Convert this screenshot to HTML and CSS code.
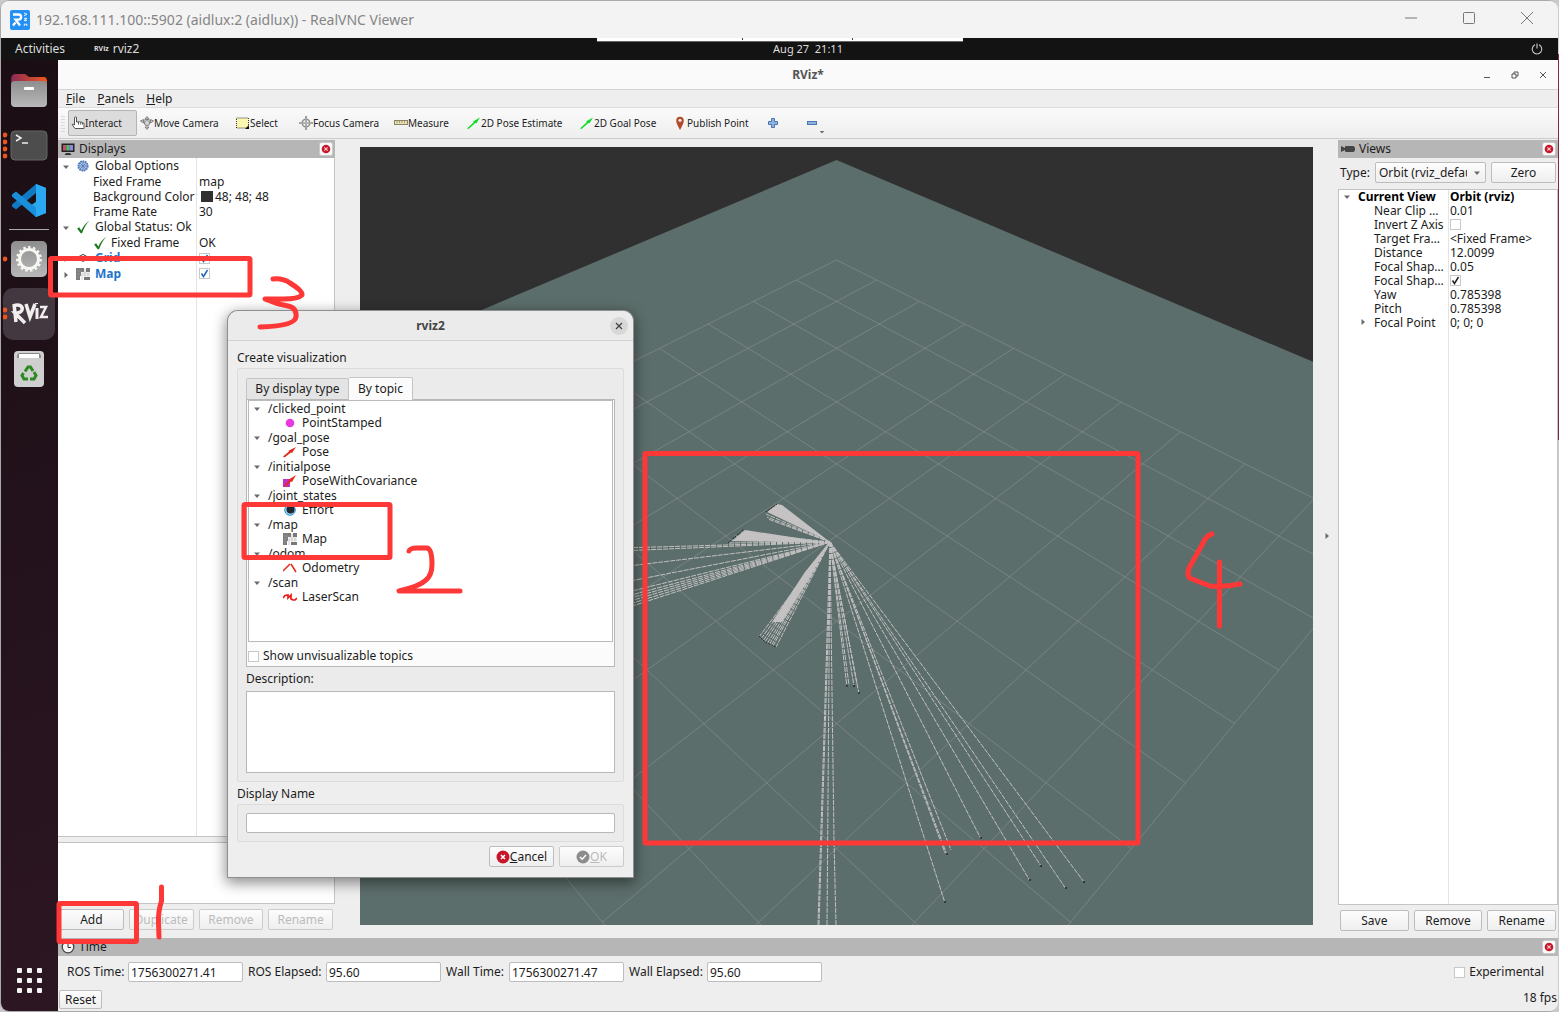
FILE: index.html
```html
<!DOCTYPE html>
<html lang="en">
<head>
<meta charset="utf-8">
<title>192.168.111.100::5902 (aidlux:2 (aidlux)) - RealVNC Viewer</title>
<link rel="stylesheet" href="styles.css">
</head>
<body>
<svg class="defs" width="0" height="0" aria-hidden="true">
  <symbol id="i-close" viewBox="0 0 14 14"><rect x=".5" y=".5" width="13" height="13" rx="2" fill="#fafafa" stroke="#c9c9c9"/><circle cx="7" cy="7" r="4.300" fill="#c8192b"/><path d="M5.300 5.300l3.400 3.400M8.700 5.300L5.300 8.700" stroke="#f3c4c8" stroke-width="1.200"/></symbol>
  <symbol id="i-down" viewBox="0 0 8 8"><path d="M1 2.500h6L4 6z" fill="#6a6a6a"/></symbol>
  <symbol id="i-right" viewBox="0 0 8 8"><path d="M2.500 1v6L6 4z" fill="#6a6a6a"/></symbol>
  <symbol id="i-map" viewBox="0 0 14 14"><path d="M0 1h8v4H5v4H4v4H0z" fill="#787878"/><path d="M10 1h4v4h-4zM8 10h6v3H8z" fill="#787878"/><path d="M6 6h8M6 8h8M6 6v7M9 2v8M12 6v4" stroke="#c4c4c4" stroke-width=".8" fill="none"/><path d="M2 1v12M4 1v8M0 4h8M0 7h4M0 10h4" stroke="#9a9a9a" stroke-width=".5"/></symbol>
  <symbol id="i-check" viewBox="0 0 12 12"><path d="M1 7.200l1.700-1L4.600 9C6 5.500 8 3 11.400.6 8.300 4 6.600 7.400 5.200 11.400H4z" fill="#1f7a1f"/></symbol>
  <symbol id="i-green" viewBox="0 0 14 14"><path d="M0 12.500L7 6l-1-.6L13 1.500 9.500 7.300 8.400 7 1.600 13z" fill="#10dc28"/></symbol>
  <symbol id="i-move" viewBox="0 0 14 14"><g fill="#d4d4d4" stroke="#777" stroke-width=".9"><path d="M7 .6l2 2.400H5zM7 13.400l2-2.400H5zM.500 5l3-1.500v3.500zM13.500 5l-3-1.500v3.500z"/><circle cx="7" cy="7" r="2.600"/><path d="M3.500 4.500c2-1.400 5-1.400 7 0"/></g></symbol>
  <symbol id="i-focus" viewBox="0 0 14 14"><g fill="none" stroke="#8a8a8a"><circle cx="7" cy="7" r="3.800" stroke-width="1.400"/><path d="M7 0v14M0 7h14" stroke-width="1.600"/><path d="M7 2v10M2 7h10" stroke="#ddd" stroke-width=".5"/></g></symbol>
</svg>

<div class="window">
  <header class="vnc-bar">
    <svg class="vnc-logo" viewBox="0 0 20 20"><rect width="20" height="20" rx="2" fill="#2490f5"/><path d="M3 4.500h5.500a2.600 2.600 0 0 1 0 5.200H5.500L10 15.500M3 15.500l2.500-3" fill="none" stroke="#fff" stroke-width="2.300"/><path d="M14 3l3 1.300-3 1.400M14 8.300h3l-3 2.300h3M14.300 16v-1.800h2.600V16" fill="none" stroke="#fff" stroke-width=".9"/></svg>
    <span class="vnc-title">192.168.111.100::5902 (aidlux:2 (aidlux)) - RealVNC Viewer</span>
    <div class="vnc-controls">
      <button type="button" aria-label="Minimize"><svg viewBox="0 0 12 12"><path d="M0 6.500h12"/></svg></button>
      <button type="button" aria-label="Maximize"><svg viewBox="0 0 12 12"><rect x=".5" y="1" width="11" height="11" rx="1"/></svg></button>
      <button type="button" aria-label="Close"><svg viewBox="0 0 12 12"><path d="M0 .5l12 12M12 .5L0 12.500"/></svg></button>
    </div>
  </header>

  <div class="desktop">
    <div class="topbar">
      <div class="top-left"><span>Activities</span><span class="app"><b class="mini">RViz</b>rviz2</span></div>
      <span class="clock">Aug 27&nbsp; 21:11</span>
      <svg class="power" viewBox="0 0 12 12"><path d="M4 1.800a4.800 4.800 0 1 0 4 0M6 .5v5" fill="none" stroke="#ccc" stroke-width="1.100"/></svg>
      <div class="handle"><i></i><i></i></div>
    </div>

    <div class="workspace">
      <nav class="dock" aria-label="Dock">
        <div class="slot"><svg viewBox="0 0 52 52"><defs><linearGradient id="fo"><stop offset="0" stop-color="#8a2a56"/><stop offset="1" stop-color="#f0591f"/></linearGradient><linearGradient id="gr" x2="0" y2="1"><stop offset="0" stop-color="#8e8e8e"/><stop offset="1" stop-color="#b8b8b8"/></linearGradient></defs><path d="M8 16q0-6 4-6h10l4 3h15q3 0 3 5v6H8z" fill="url(#fo)"/><rect x="8" y="17" width="36" height="26" rx="4" fill="url(#gr)"/><rect x="21" y="23" width="10" height="3" rx="1" fill="#fff"/></svg></div>
        <div class="slot"><svg viewBox="0 0 52 52"><rect x="8" y="12" width="36" height="29" rx="4" fill="#4d4d4d" stroke="#676767"/><path d="M13 16l5 3-5 3" fill="none" stroke="#eee" stroke-width="1.500"/><path d="M19 24h6" stroke="#eee" stroke-width="1.500"/><g fill="#e95420"><circle cx="2" cy="16" r="2.400"/><circle cx="2" cy="23" r="2.400"/><circle cx="2" cy="30" r="2.400"/><circle cx="2" cy="37" r="2.400"/></g></svg></div>
        <div class="slot"><svg viewBox="0 0 52 52"><path d="M33 10l10 4v25l-10 4-9-9 10-7z" fill="#2aa3ee"/><path d="M33 10v9L13 35.500l-4-3v-2z" fill="#0f79c4"/><path d="M33 43v-9L13 17.500l-4 3v2z" fill="#1a8ed8"/><path d="M33 10l10 4v25l-10 4z" fill="#2ba8f2"/></svg></div>
        <hr>
        <div class="slot"><svg viewBox="0 0 52 52"><rect x="8" y="8" width="36" height="36" rx="5" fill="url(#gr)"/><circle cx="26" cy="26" r="9.500" fill="none" stroke="#f6f6f2" stroke-width="3"/><circle cx="26" cy="26" r="11.700" fill="none" stroke="#f6f6f2" stroke-width="2.500" stroke-dasharray="2.450 2.450"/><circle cx="2" cy="26" r="2.400" fill="#e95420"/></svg></div>
        <div class="slot active"><svg viewBox="0 0 52 52"><g fill="none" stroke="#f1eeee" stroke-width="3.500"><path d="M11 16l2 18M10 18c7-3 10 1 9 4s-4 3-7 3l10 10M23 16l4 13 5-13"/><path d="M34 20v11M33.500 15v1" stroke-width="3"/><path d="M37 19h6l-5 10h7" stroke-width="2.500"/></g><g fill="#e95420"><circle cx="2" cy="22" r="2.400"/><circle cx="2" cy="29" r="2.400"/></g></svg></div>
        <div class="slot"><svg viewBox="0 0 52 52"><rect x="11" y="8" width="30" height="36" rx="4" fill="#cfcfcf"/><path d="M14 15q0-5 3-5h18q3 0 3 5z" fill="#888"/><path d="M16 11h20v4H16z" fill="#fff"/><g fill="none" stroke="#2c8a22" stroke-width="3"><path d="M22 28.500l3-4.500h2.500l2.500 4"/><path d="M31 29l2 3.500-2 3.500h-4"/><path d="M25 36h-4l-2-3.500 1.500-2.500"/></g></svg></div>
        <div class="slot apps"><svg viewBox="0 0 52 52"><g fill="#f2f2f2"><rect x="14" y="13" width="5" height="5" rx="1"/><rect x="24" y="13" width="5" height="5" rx="1"/><rect x="34" y="13" width="5" height="5" rx="1"/><rect x="14" y="23" width="5" height="5" rx="1"/><rect x="24" y="23" width="5" height="5" rx="1"/><rect x="34" y="23" width="5" height="5" rx="1"/><rect x="14" y="33" width="5" height="5" rx="1"/><rect x="24" y="33" width="5" height="5" rx="1"/><rect x="34" y="33" width="5" height="5" rx="1"/></g></svg></div>
      </nav>

      <main class="rviz">
        <div class="rviz-title">
          <h1>RViz*</h1>
          <div class="wm">
            <svg viewBox="0 0 8 8"><path d="M1 6.500h6"/></svg>
            <svg viewBox="0 0 8 8"><path d="M1 3h4v4H1zM3 3V1h4v4H5"/></svg>
            <svg viewBox="0 0 8 8"><path d="M1 1l6 6M7 1L1 7"/></svg>
          </div>
        </div>
        <div class="menubar"><span><u>F</u>ile</span><span><u>P</u>anels</span><span><u>H</u>elp</span></div>
        <div class="toolbar">
          <i class="grip"></i>
          <button type="button" class="on w-interact"><svg viewBox="0 0 14 14"><path d="M3.500 9V2q0-1.200 1-1.200T5.500 2v4q3-.8 6 .6l1.500.7v5.200H4L1 8.500q1-1 2.500.5" fill="#fff" stroke="#555"/><path d="M7.500 6v2.500M9.700 6.300v2.200M11.500 7v1.500" stroke="#555"/></svg>Interact</button>
          <button type="button" class="w-move"><svg><use href="#i-move"/></svg>Move Camera</button>
          <button type="button" class="w-select"><svg viewBox="0 0 14 14"><rect x=".5" y="2" width="12" height="10" fill="#fbf6b0" stroke="#333" stroke-dasharray="1 1"/><path d="M13 9v4H9z" fill="#111"/></svg>Select</button>
          <button type="button" class="w-focus"><svg><use href="#i-focus"/></svg>Focus Camera</button>
          <button type="button" class="w-measure"><svg viewBox="0 0 14 14"><rect x=".5" y="4.500" width="13" height="4" fill="#e8dfae" stroke="#8a8468"/><path d="M3 5v2M5.500 5v2M8 5v2M10.500 5v2" stroke="#8a8468" stroke-width=".7"/></svg>Measure</button>
          <button type="button" class="w-pose"><svg><use href="#i-green"/></svg>2D Pose Estimate</button>
          <button type="button" class="w-goal"><svg><use href="#i-green"/></svg>2D Goal Pose</button>
          <button type="button" class="w-point"><svg viewBox="0 0 14 14"><path d="M7 14C5 10 3.200 7.500 3.200 4.600a3.800 3.800 0 0 1 7.600 0C10.800 7.500 9 10 7 14z" fill="#b04a2c"/><circle cx="7" cy="4.300" r="1.600" fill="#f6e4de"/></svg>Publish Point</button>
          <button type="button" class="w-add" aria-label="Add tool"><svg viewBox="0 0 14 14"><path d="M5.500 2.500h3v3h3v3h-3v3h-3v-3h-3v-3h3z" fill="#8db0dc" stroke="#4a78b4"/></svg></button>
          <button type="button" class="w-remove" aria-label="Remove tool"><svg viewBox="0 0 14 14"><rect x="2.500" y="5.500" width="9" height="3" fill="#8db0dc" stroke="#4a78b4"/></svg><svg class="drop"><use href="#i-down"/></svg></button>
        </div>

        <div class="docks">
          <section class="panel displays">
            <h2><svg viewBox="0 0 14 14"><path d="M.5 1.500h13v8.500H.500z" fill="#222"/><path d="M2 3h3.300v5.500H2z" fill="#c05065"/><path d="M5.300 3h3.400v5.500H5.300z" fill="#5cb870"/><path d="M8.700 3H12v5.500H8.700z" fill="#8a8be0"/><path d="M5 11h4l1.500 2h-7z" fill="#333"/></svg>Displays<button type="button" aria-label="Close Displays"><svg><use href="#i-close"/></svg></button></h2>
            <div class="tree-box">
              <table>
                <tr class="tall"><td><svg class="arr"><use href="#i-down"/></svg><svg class="ico" viewBox="0 0 12 12"><circle cx="6" cy="6" r="4" fill="#a9c2e6" stroke="#4f79b8" stroke-width="1.600" stroke-dasharray="1.400 .6"/><path d="M6 2v8M2 6h8M3.200 3.200l5.600 5.600M8.800 3.200L3.200 8.800" stroke="#4f79b8" stroke-width=".6"/></svg>Global Options</td><td></td></tr>
                <tr><td class="prop">Fixed Frame</td><td>map</td></tr>
                <tr><td class="prop">Background Color</td><td><i class="swatch"></i>48; 48; 48</td></tr>
                <tr><td class="prop">Frame Rate</td><td>30</td></tr>
                <tr class="tall"><td><svg class="arr"><use href="#i-down"/></svg><svg class="ico"><use href="#i-check"/></svg>Global Status: Ok</td><td></td></tr>
                <tr class="tall"><td class="prop"><svg class="ico"><use href="#i-check"/></svg>Fixed Frame</td><td>OK</td></tr>
                <tr><td><svg class="arr"><use href="#i-right"/></svg><svg class="ico" viewBox="0 0 12 12"><path d="M1 5l5-3 5 3-5 3z" fill="none" stroke="#555"/></svg><b>Grid</b></td><td><input type="checkbox" class="blue" aria-label="Grid" checked></td></tr>
                <tr class="tall"><td><svg class="arr"><use href="#i-right"/></svg><svg class="ico"><use href="#i-map"/></svg><b>Map</b></td><td><input type="checkbox" class="blue" aria-label="Map" checked></td></tr>
              </table>
            </div>
            <div class="split"></div>
            <div class="help-box"></div>
            <div class="actions">
              <button type="button">Add</button><button type="button" disabled>Duplicate</button><button type="button" disabled>Remove</button><button type="button" disabled>Rename</button>
            </div>
          </section>

          <svg class="view3d" viewBox="360 147 953 778" preserveAspectRatio="xMidYMid slice" role="img" aria-label="3D view">
            <rect x="0" y="0" width="1700" height="1200" fill="#303030"/>
            <path d="M836.500 160L1800 568V1300H-150V577z" fill="#5c6e6b"/>
            <g transform="translate(836.500 536)" fill="none" stroke="#a0a0a4" stroke-opacity=".42">
              <g id="rows"><path d="M0 669.800L-552.900 0M88.400 562.700L-477.700-37.500M165.800 468.900L-408.300-72.200M234.100 386.200L-344-104.300M294.800 312.600L-284.400-134M349.100 246.800L-228.800-161.800M398 187.600L-176.900-187.700M442.200 134L-128.400-211.900M482.500 85.300L-82.900-234.600M519.200 40.800L-40.200-255.900M552.900 0L0-276"/></g>
              <use href="#rows" transform="scale(-1 1)"/>
            </g>
            <g fill="#c4c2c2">
              <path d="M830 542L767 512 777 504 782 505z"/>
              <path d="M830 543L732 541 745 530z"/>
              <path d="M830 541L805 572 772 622 782 622 810 577z"/>
            </g>
            <g class="rays">
              <path d="M830 542L766 514M830 542L767 517M830 542L768 519M830 542L728 543M830 542L731 540M830 542L735 536M830 542L740 532"/>
              <path d="M830 542L620 548M830 542L620 551M830 542L620 567M830 542L620 583M830 542L620 594M830 542L620 598M830 542L620 601M830 542L620 604M830 542L620 607M830 542L620 610"/>
              <path d="M830 542L759 637M830 542L761 639M830 542L763 641M830 542L765 642M830 542L767 644M830 542L769 645M830 542L771 646M830 542L773 646M830 542L776 647"/>
              <path d="M830 542L847 687M830 542L849 685M830 542L854 686M830 542L857 684M830 542L859 694"/>
              <path d="M830 542L818 925M831 542L819 925M830 542L827 925M830 542L834 840 836 925"/>
              <path d="M830 542L945 903M830 542L945 853M830 542L947 855M830 542L951 850M830 542L981 839M830 542L1030 881M830 542L1041 866M830 542L1066 889M830 542L1084 882"/>
            </g>
            <path d="M766 512l11-8M728 543l16-14M759 636l6 6 11 5" fill="none" stroke="#222" stroke-dasharray="2 1"/>
            <path d="M846 686h2M853 686h2M858 693h2M944 902h2M946 854h2M980 838h2M1029 880h2M1040 866h2M1065 888h2M1083 882h2" stroke="#1c2222" stroke-width="1.500"/>
          </svg>
          <svg class="collapse"><use href="#i-right"/></svg>

          <section class="panel views">
            <h2><svg viewBox="0 0 14 14"><path d="M0 4l4 2V5q0-1 1-1h7q2 0 2 3t-2 3H5q-1 0-1-1V8L0 10z" fill="#444"/></svg>Views<button type="button" aria-label="Close Views"><svg><use href="#i-close"/></svg></button></h2>
            <div class="type-row">
              <label for="type">Type:</label>
              <div class="select"><select id="type"><option>Orbit (rviz_default_plugins)</option></select><svg><use href="#i-down"/></svg></div>
              <button type="button">Zero</button>
            </div>
            <div class="tree-box">
              <table>
                <tr class="head"><td><svg class="arr"><use href="#i-down"/></svg>Current View</td><td>Orbit (rviz)</td></tr>
                <tr><td class="prop">Near Clip …</td><td>0.01</td></tr>
                <tr><td class="prop">Invert Z Axis</td><td><input type="checkbox" aria-label="Invert Z Axis"></td></tr>
                <tr><td class="prop">Target Fra…</td><td>&lt;Fixed Frame&gt;</td></tr>
                <tr><td class="prop">Distance</td><td>12.0099</td></tr>
                <tr><td class="prop">Focal Shap…</td><td>0.05</td></tr>
                <tr><td class="prop">Focal Shap…</td><td><input type="checkbox" aria-label="Focal Shape Fixed Size" checked></td></tr>
                <tr><td class="prop">Yaw</td><td>0.785398</td></tr>
                <tr><td class="prop">Pitch</td><td>0.785398</td></tr>
                <tr><td class="sub"><svg class="arr"><use href="#i-right"/></svg>Focal Point</td><td>0; 0; 0</td></tr>
              </table>
            </div>
            <div class="actions"><button type="button">Save</button><button type="button">Remove</button><button type="button">Rename</button></div>
          </section>
        </div>

        <section class="panel time">
          <h2><svg viewBox="0 0 14 14"><circle cx="7" cy="7" r="5.800" fill="#f4f4f4" stroke="#444" stroke-width="1.300"/><path d="M7 3.500V7.500h3" fill="none" stroke="#333"/></svg>Time<button type="button" aria-label="Close Time"><svg><use href="#i-close"/></svg></button></h2>
          <div class="time-row">
            <label for="rt" class="l1">ROS Time:</label><input id="rt" type="text" value="1756300271.41">
            <label for="re" class="l2">ROS Elapsed:</label><input id="re" type="text" value="95.60">
            <label for="wt" class="l3">Wall Time:</label><input id="wt" type="text" value="1756300271.47">
            <label for="we" class="l4">Wall Elapsed:</label><input id="we" type="text" value="95.60">
            <label class="exp"><input type="checkbox">Experimental</label>
          </div>
          <div class="status-row"><button type="button">Reset</button><span>18 fps</span></div>
        </section>
      </main>
    </div>
  </div>
</div>

<div class="dialog" role="dialog" aria-label="rviz2">
  <div class="dialog-title"><h2>rviz2</h2><button type="button" aria-label="Close"><svg viewBox="0 0 8 8"><path d="M1 1l6 6M7 1L1 7"/></svg></button></div>
  <div class="dialog-body">
    <p class="label">Create visualization</p>
    <div class="group">
      <div class="tabs"><button type="button">By display type</button><button type="button" class="sel">By topic</button></div>
      <div class="pane">
        <ul class="topics">
          <li class="t"><svg class="arr"><use href="#i-down"/></svg>/clicked_point</li>
          <li><svg viewBox="0 0 14 14"><circle cx="7" cy="7" r="4.300" fill="#e838e0"/></svg>PointStamped</li>
          <li class="t"><svg class="arr"><use href="#i-down"/></svg>/goal_pose</li>
          <li><svg viewBox="0 0 14 14"><path d="M0 11.500L6 6.500l-.5-.8L13 2 9 8l-1-.5L1.500 12.500z" fill="#e42a1c"/></svg>Pose</li>
          <li class="t"><svg class="arr"><use href="#i-down"/></svg>/initialpose</li>
          <li><svg viewBox="0 0 14 14"><path d="M0 5h7v8H0z" fill="#c02fc6"/><path d="M1 12L6 6.500l-.5-.8L13 1 9 8l-1-.5L2 13z" fill="#e42a1c"/></svg>PoseWithCovariance</li>
          <li class="t"><svg class="arr"><use href="#i-down"/></svg>/joint_states</li>
          <li><svg viewBox="0 0 14 14"><circle cx="7" cy="7" r="5.300" fill="#9ed2f0" stroke="#2a94d8"/><circle cx="7.500" cy="6.500" r="4" fill="#1d2730"/></svg>Effort</li>
          <li class="t"><svg class="arr"><use href="#i-down"/></svg>/map</li>
          <li><svg><use href="#i-map"/></svg>Map</li>
          <li class="t"><svg class="arr"><use href="#i-down"/></svg>/odom</li>
          <li><svg viewBox="0 0 14 14"><path d="M0 10l7-7M8 3l5 8" fill="none" stroke="#e42a1c" stroke-width="1.500"/></svg>Odometry</li>
          <li class="t"><svg class="arr"><use href="#i-down"/></svg>/scan</li>
          <li><svg viewBox="0 0 14 14"><path d="M0 8l2-2.500 3-.5v3l3-3v4l2 1h2l2-2" fill="none" stroke="#f01414" stroke-width="1.700"/></svg>LaserScan</li>
        </ul>
        <label class="show"><input type="checkbox">Show unvisualizable topics</label>
      </div>
      <label class="desc-label" for="desc">Description:</label>
      <textarea id="desc"></textarea>
    </div>
    <label class="label name-label" for="dname">Display Name</label>
    <div class="group name"><input type="text" id="dname"></div>
    <div class="dialog-actions">
      <button type="button"><svg viewBox="0 0 14 14"><circle cx="7" cy="7" r="6.500" fill="#c7162b"/><path d="M5 5l4 4M9 5L5 9" stroke="#fff" stroke-width="1.500"/></svg><span><u>C</u>ancel</span></button>
      <button type="button" disabled><svg viewBox="0 0 14 14"><circle cx="7" cy="7" r="6.500" fill="#8c8c8c"/><path d="M4 7l2.200 2.200L10 5" fill="none" stroke="#fff" stroke-width="1.500"/></svg><span><u>O</u>K</span></button>
    </div>
  </div>
</div>

<svg class="marks" viewBox="0 0 1559 1012" aria-hidden="true">
  <rect x="50.500" y="258.500" width="199.500" height="36.500" rx="1"/>
  <rect x="244" y="504.500" width="146" height="53" rx="1"/>
  <rect x="59" y="903.500" width="77.500" height="38" rx="1"/>
  <rect x="645" y="453.500" width="493" height="389.500" rx="1"/>
  <path d="M161.500 887v14Q158 912 158.500 922L159 937"/>
  <path d="M409 551Q410 548 417 548H427Q432 549 432 564Q432 575 426 580Q420 586 399 591H460"/>
  <path d="M273 279Q283 278 290 283Q303 291 302 295Q298 299 284 299H265Q276 304 288 306Q297 308 296 317Q295 326 260 327"/>
  <path d="M1212 534Q1206 535 1202 545L1189 568Q1186 577 1192 579Q1202 583 1210 586Q1226 587 1240 584M1219.500 562V626"/>
</svg>
</body>
</html>
```
FILE: styles.css
```css
* { box-sizing: border-box; }
body {
  margin: 0;
  min-height: 100vh;
  overflow: hidden;
  position: relative;
  font: 12px/16px "Noto Sans", sans-serif;
  color: #1c1c1c;
  background: linear-gradient(#7d2b38, #7d2b38) right 0 top 54px / 1px 386px no-repeat #c8cacc;
}
button, input, select, textarea { font: inherit; color: inherit; margin: 0; }
button { padding: 0; }
h1, h2, p, ul { margin: 0; padding: 0; font-size: 12px; list-style: none; }
svg { flex: none; }
.defs { position: absolute; }

.window {
  height: 100vh;
  display: flex;
  flex-direction: column;
  margin-right: 1px;
  border: 1px solid #a9a9a9;
  border-width: 1px 0 1px 1px;
  border-radius: 9px;
  overflow: hidden;
  background: #eee;
}
.vnc-bar { flex: none; height: 37px; display: flex; align-items: center; gap: 6px; padding: 0 2px 0 9px; background: #f3f3f3; }
.vnc-logo { width: 20px; height: 20px; }
.vnc-title { flex: 1; font-size: 14px; line-height: 20px; color: #858585; }
.vnc-controls { display: flex; }
.vnc-controls button { width: 58px; height: 32px; border: 0; background: none; }
.vnc-controls svg { width: 12px; height: 13px; overflow: visible; fill: none; stroke: #777; }

.desktop { flex: 1; min-height: 0; display: flex; flex-direction: column; }
.topbar {
  position: relative;
  flex: none;
  height: 22px;
  display: grid;
  grid-template-columns: 57px minmax(0, 1fr) auto minmax(0, 1fr);
  align-items: center;
  background: #131313;
  color: #ddd;
}
.top-left { grid-column: 1 / 3; grid-row: 1; display: flex; gap: 29px; padding-left: 14px; }
.app { display: flex; gap: 4px; }
.mini { font-size: 7px; }
.clock { grid-column: 3; grid-row: 1; font-size: 11px; }
.power { grid-column: 4; grid-row: 1; justify-self: end; width: 12px; height: 12px; margin-right: 15px; }
.handle { position: absolute; top: 0; left: 596px; width: 366px; height: 4px; display: flex; gap: 109px; padding-left: 145px; background: #fff; border-bottom: 1px solid #666; }
.handle i { width: 1px; height: 2px; background: #444; }

.workspace { flex: 1; min-height: 0; display: flex; }
.dock {
  flex: none;
  width: 57px;
  display: flex;
  flex-direction: column;
  align-items: center;
  padding: 4px 2px 4px 0;
  gap: 3px;
  background: linear-gradient(160deg, #1a0e14, #2c1622);
}
.slot { width: 52px; height: 52px; border-radius: 10px; }
.slot svg { display: block; width: 52px; height: 52px; }
.slot.active { background: #443840; }
.apps { margin-top: auto; }
.dock hr { width: 40px; height: 1px; margin: 0; border: 0; background: #aaa; }

.rviz { flex: 1; min-width: 0; display: flex; flex-direction: column; background: #eee; }
.rviz-title { flex: none; height: 30px; display: grid; grid-template-columns: 1fr auto 1fr; align-items: center; background: #fafafa; border-bottom: 1px solid #d5d5d5; }
.rviz-title h1 { grid-column: 2; color: #555; }
.wm { display: flex; justify-content: flex-end; gap: 20px; padding-right: 11px; }
.wm svg { width: 8px; height: 8px; fill: none; stroke: #555; }
.menubar { flex: none; height: 18px; display: flex; gap: 12px; padding-left: 8px; line-height: 18px; border-bottom: 1px solid #ddd; }
.toolbar { flex: none; height: 31px; display: flex; align-items: center; padding-left: 3px; background: linear-gradient(#fafafa, #eee); border-bottom: 1px solid #ccc; }
.grip { width: 4px; height: 17px; margin-right: 3px; background: radial-gradient(#bbb 30%, transparent 40%) 0 0 / 2px 3px; }
.toolbar button { display: flex; align-items: center; height: 26px; padding-left: 2px; border: 1px solid transparent; background: none; font-size: 10px; white-space: nowrap; }
.toolbar svg { width: 14px; height: 14px; }
.toolbar .on { background: #dcdcdc; border-color: #b4b4b4; border-radius: 2px; }
.w-interact { width: 69px; }
.w-move { width: 96px; }
.w-select { width: 63px; }
.w-focus { width: 95px; }
.w-measure { width: 73px; }
.w-pose { width: 113px; }
.w-goal { width: 93px; }
.w-point { width: 93px; }
.w-add { width: 39px; }
.toolbar .drop { width: 6px; height: 6px; align-self: flex-end; }

.docks { flex: 1; min-height: 0; display: flex; padding-top: 1px; }
.panel { display: flex; flex-direction: column; }
.displays { flex: none; width: 277px; }
.views { flex: none; width: 220px; }
.panel h2 { flex: none; height: 18px; display: flex; align-items: center; gap: 4px; padding: 0 2px 0 3px; background: #b6b6b6; font-weight: 400; }
.panel h2 svg { width: 14px; height: 14px; }
.panel h2 button { display: flex; margin-left: auto; border: 0; background: none; }
.tree-box { flex: 1; min-height: 0; border: 1px solid #c4c4c4; background: linear-gradient(#e4e4e4, #e4e4e4) 138px 0 / 1px 100% no-repeat #fff; }
.displays .tree-box { border-width: 0 1px 1px 0; }
.views .tree-box { background-position: 109px 0; }
table { width: 100%; border-collapse: collapse; table-layout: fixed; }
tr { height: 15px; }
.tall { height: 16px; }
td { padding: 0; line-height: 14px; vertical-align: middle; white-space: nowrap; }
td:first-child { width: 138px; padding-left: 4px; }
td:nth-child(2) { padding-left: 3px; }
td svg, td input, .swatch { display: inline-block; vertical-align: middle; }
.arr { width: 8px; height: 8px; }
td .ico { width: 14px; height: 14px; margin: -1px 5px 0 6px; }
td.prop .ico { margin-left: 0; margin-right: 4px; }
td:first-child.prop { padding-left: 35px; }
td b { color: #1f74c8; }
.swatch { width: 12px; height: 11px; margin: -1px 2px 0 2px; background: #303030; }
.views tr { height: 14px; }
.views tr.head { height: 13px; }
.views td { line-height: 13px; }
.views td:first-child { width: 109px; }
.views td:nth-child(2) { padding-left: 2px; }
.views .arr { margin: -2px 7px 0 0; }
.views .head { font-weight: 700; color: #000; }
.views td:first-child.sub { padding-left: 20px; }
.displays .split { flex: none; height: 5px; }
.help-box { flex: none; height: 62px; background: #fff; border: 1px solid #c4c4c4; border-left: 0; }
input[type="checkbox"] { appearance: none; width: 11px; height: 11px; border: 1px solid #c8c8c8; background: #fff; }
input[type="checkbox"]:checked { background: no-repeat center / 9px url("data:image/svg+xml,%3Csvg xmlns='http://www.w3.org/2000/svg' viewBox='0 0 9 9'%3E%3Cpath d='M1.500 4.500l2 3L7.500 1' fill='none' stroke='%23222' stroke-width='1.500'/%3E%3C/svg%3E") #fff; }
input.blue:checked { background-image: url("data:image/svg+xml,%3Csvg xmlns='http://www.w3.org/2000/svg' viewBox='0 0 9 9'%3E%3Cpath d='M1.500 4.500l2 3L7.500 1' fill='none' stroke='%231f66b8' stroke-width='1.500'/%3E%3C/svg%3E"); }
td input { margin-top: -2px; }

.actions { flex: none; display: grid; grid-auto-flow: column; grid-auto-columns: 1fr; gap: 5px; padding: 5px 2px 8px 1px; }
.actions button, .type-row button, .status-row button, .dialog-actions button {
  height: 21px;
  border: 1px solid #bdbdbd;
  border-radius: 2px;
  background: linear-gradient(#fdfdfd, #eee);
  line-height: 18px;
}
button:disabled { color: #bbb; border-color: #ccc !important; }
.views .actions { padding: 5px 2px 7px; }
.type-row { display: flex; align-items: center; gap: 5px; padding: 4px 2px 6px; }
.type-row button { width: 65px; }
.select { flex: 1; min-width: 0; display: grid; align-items: center; }
.select select { grid-area: 1 / 1; min-width: 0; width: 100%; height: 21px; appearance: none; padding: 0 18px 0 3px; border: 1px solid #bdbdbd; border-radius: 2px; background: linear-gradient(#fdfdfd, #eee); }
.select svg { grid-area: 1 / 1; justify-self: end; width: 8px; height: 8px; margin-right: 5px; }

.view3d { flex: 1; min-width: 0; width: 0; height: calc(100% - 20px); margin: 7px 0 0 25px; background: #303030; }
.rays { fill: none; stroke: #c2c0c0; stroke-width: 1; stroke-dasharray: 5 1; }
.collapse { width: 8px; height: 8px; align-self: center; margin: 0 7px 6px 10px; }

.time { flex: none; }
.time-row { display: flex; align-items: center; gap: 5px; height: 32px; padding: 0 14px 0 9px; }
.time-row input[type="text"] { width: 115px; height: 20px; padding: 0 2px; border: 1px solid #bdbdbd; border-radius: 2px; background: #fff; }
.l1 { width: 56px; }
.l2 { width: 73px; }
.l3 { width: 58px; }
.l4 { width: 73px; }
.time-row label { white-space: nowrap; }
.exp { display: flex; align-items: center; gap: 4px; margin-left: auto; }
.status-row { display: flex; justify-content: space-between; padding: 2px 1px 2px; }
.status-row button { width: 43px; height: 19px; line-height: 16px; }

.dialog {
  position: absolute;
  left: 228px;
  top: 311px;
  width: 405px;
  border-radius: 10px 10px 0 0;
  background: #eee;
  box-shadow: 0 0 0 1px #8f8f8f, 0 4px 14px 2px rgba(0, 0, 0, .45);
}
.dialog-title { height: 30px; display: grid; grid-template-columns: 1fr auto 1fr; align-items: center; border-bottom: 1px solid #d2d2d2; border-radius: 10px 10px 0 0; background: #ebebeb; }
.dialog-title h2 { grid-column: 2; color: #444; }
.dialog-title button { justify-self: end; display: grid; place-items: center; width: 18px; height: 18px; margin-right: 5px; border: 0; border-radius: 9px; background: #d8d8d8; }
.dialog-title svg { width: 8px; height: 8px; fill: none; stroke: #444; stroke-width: 1.3; }
.dialog-body { padding: 9px 9px 10px; display: flex; flex-direction: column; }
.label { line-height: 16px; }
.group { display: flex; flex-direction: column; margin-top: 2px; padding: 8px; border: 1px solid #dcdcdc; border-radius: 2px; background: #ebebeb; }
.tabs { display: flex; align-items: flex-end; }
.tabs button { width: 103px; height: 21px; border: 1px solid #c4c4c4; border-bottom: 0; border-radius: 2px 2px 0 0; background: #e4e4e4; }
.tabs .sel { width: 64px; height: 23px; margin-bottom: -1px; border-left: 0; background: #fbfbfb; position: relative; }
.pane { border: 1px solid #b8b8b8; background: #fbfbfb; }
.topics { height: 242px; margin: 0 1px; border: 1px solid #bbb; background: #fff; }
.topics li { display: flex; align-items: center; gap: 5px; height: 14px; padding-left: 34px; line-height: 14px; }
.topics .t { height: 15px; padding-left: 4px; gap: 7px; }
.topics li svg { width: 14px; height: 14px; }
.topics li .arr { width: 8px; height: 8px; }
.show { display: flex; align-items: center; gap: 4px; height: 24px; padding: 4px 0 0 1px; }
.desc-label { margin: 4px 0; }
textarea { display: block; width: 100%; height: 82px; resize: none; border: 1px solid #b8b8b8; background: #fff; }
.name-label { margin-top: 4px; }
.name input { height: 20px; border: 1px solid #b8b8b8; border-radius: 2px; background: #fff; }
.dialog-actions { display: flex; justify-content: flex-end; gap: 5px; padding-top: 4px; }
.dialog-actions button { width: 65px; display: flex; align-items: center; justify-content: center; }
.dialog-actions svg { width: 14px; height: 14px; }

.marks { position: absolute; left: 0; top: 0; width: 100%; pointer-events: none; fill: none; stroke: #fe3737; stroke-width: 5; stroke-linecap: round; stroke-linejoin: round; }
```
